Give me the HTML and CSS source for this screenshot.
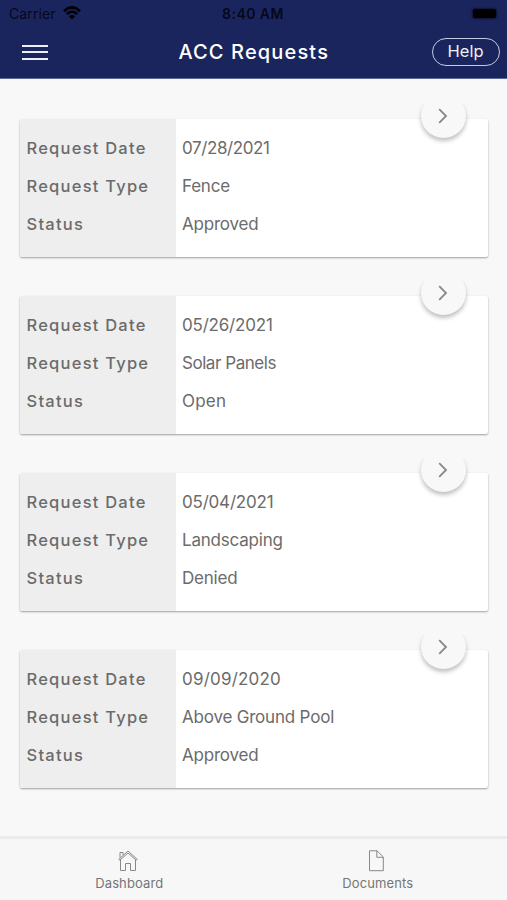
FILE: index.html
```html
<!DOCTYPE html>
<html lang="en">
<head>
<meta charset="utf-8">
<title>ACC Requests</title>
<link rel="stylesheet" href="styles.css">
</head>
<body>
<header class="header">
  <div class="statusbar">
    <div class="carrier"><span>Carrier</span>
      <svg width="18" height="14" viewBox="0 0 18 14"><path d="M1 5.2Q9-2.4 17 5.2M3.8 8Q9 3.2 14.2 8" fill="none" stroke="currentColor" stroke-width="2.6"/><path d="M5.9 10.2Q9 7.6 12.1 10.2L9 13.4Z" fill="currentColor"/></svg>
    </div>
    <span class="clock">8:40 AM</span>
    <span class="battery"></span>
  </div>
  <div class="navbar">
    <div class="menu"><i></i><i></i><i></i></div>
    <h1>ACC Requests</h1>
    <button class="help">Help</button>
  </div>
</header>
<main class="list">
  <article class="card">
    <div class="labels"><span>Request Date</span><span>Request Type</span><span>Status</span></div>
    <div class="values"><span class="date">07/28/2021</span><span>Fence</span><span>Approved</span></div>
    <div class="go"><svg width="10" height="16" viewBox="0 0 10 16"><path d="M1.200 1.200L8 8L1.200 14.800"/></svg></div>
  </article>
  <article class="card">
    <div class="labels"><span>Request Date</span><span>Request Type</span><span>Status</span></div>
    <div class="values"><span>05/26/2021</span><span class="snug">Solar Panels</span><span class="open">Open</span></div>
    <div class="go"><svg width="10" height="16" viewBox="0 0 10 16"><path d="M1.200 1.200L8 8L1.200 14.800"/></svg></div>
  </article>
  <article class="card">
    <div class="labels"><span>Request Date</span><span>Request Type</span><span>Status</span></div>
    <div class="values"><span>05/04/2021</span><span>Landscaping</span><span>Denied</span></div>
    <div class="go"><svg width="10" height="16" viewBox="0 0 10 16"><path d="M1.200 1.200L8 8L1.200 14.800"/></svg></div>
  </article>
  <article class="card">
    <div class="labels"><span>Request Date</span><span>Request Type</span><span>Status</span></div>
    <div class="values"><span class="open">09/09/2020</span><span>Above Ground Pool</span><span>Approved</span></div>
    <div class="go"><svg width="10" height="16" viewBox="0 0 10 16"><path d="M1.200 1.200L8 8L1.200 14.800"/></svg></div>
  </article>
</main>
<nav class="tabs">
  <div class="tab home">
    <svg width="22" height="22" viewBox="0 0 22 22"><path d="M3.500 9.500V20.500H8.500V13.500H13.500V20.500H18.500V9.500M1.800 9.300L11 1L20.200 9.300L19.300 10.300L11 3L2.700 10.300ZM3 7.500V2.500H6V5"/></svg>
    <span>Dashboard</span>
  </div>
  <div class="tab docs">
    <svg width="22" height="22" viewBox="0 0 22 22"><path d="M4.500 .8H12L18.300 7V20.700H4.500ZM11.800 .8V7.300H18.300"/></svg>
    <span>Documents</span>
  </div>
</nav>
</body>
</html>
```

FILE: styles.css
```css
* { box-sizing: border-box; }
body {
  margin: 0;
  height: 900px;
  display: flex;
  flex-direction: column;
  overflow: hidden;
  background: #f8f8f8;
  color: #6b6b6b;
  font-family: Inter, "Liberation Sans", sans-serif;
}
.header {
  height: 79px;
  background: #1b255d;
  border-bottom: 1px solid #5a6693;
}
.statusbar {
  height: 27px;
  padding: 0 11px 0 9px;
  display: grid;
  grid-template-columns: 1fr auto 1fr;
  align-items: center;
  color: #05081a;
  font-size: 14px;
}
.carrier { display: flex; align-items: center; gap: 7px; letter-spacing: .1px; }
.carrier svg { color: #000; margin-top: -2px; }
.clock { margin-left: 1px; font-weight: 600; letter-spacing: .45px; }
.battery { justify-self: end; width: 23px; height: 9px; border-radius: 2px; background: #000; box-shadow: 0 0 2px 1px #0d1333; }
.navbar {
  height: 50px;
  padding: 0 7.500px 0 22px;
  display: grid;
  grid-template-columns: 1fr auto 1fr;
  align-items: center;
  color: #fff;
}
.menu { display: grid; gap: 4.500px; width: 26px; }
.menu i { height: 2px; background: #eceef8; }
h1 { margin: -1px 7px 0 -7px; font-size: 20px; font-weight: 500; letter-spacing: 1.150px; line-height: 26px; }
.help {
  justify-self: end;
  width: 68px;
  height: 28px;
  padding: 0 0 2px;
  border: 1.500px solid #c5cae0;
  border-radius: 14px;
  background: none;
  color: #eef0f8;
  font: 400 16.500px/22px Inter, sans-serif;
}
.list {
  flex: 1;
  padding: 39.500px 19px 0 20px;
  display: flex;
  flex-direction: column;
  gap: 39px;
}
.card {
  position: relative;
  flex: none;
  height: 138px;
  display: grid;
  grid-template-columns: 156px 1fr;
  background: #fff;
  border-radius: 2px;
  box-shadow: 0 1px 2px rgba(0,0,0,.36);
}
.labels, .values {
  padding: 10px 6px 0;
  display: grid;
  grid-template-rows: repeat(3, 38px);
  line-height: 38px;
  font-size: 16.500px;
  white-space: nowrap;
}
.labels { padding-left: 6.500px; background: #eee; border-radius: 2px 0 0 2px; font-weight: 500; letter-spacing: 1.230px; }
.values { font-size: 17px; letter-spacing: -.2px; }
.values .date { letter-spacing: -.4px; }
.values .snug { letter-spacing: -.45px; }
.values .open { letter-spacing: .2px; }
.go {
  position: absolute;
  right: 22.500px;
  top: -24.500px;
  width: 45px;
  height: 44px;
  display: grid;
  place-items: center;
  border-radius: 50%;
  background: #f8f8f8;
  box-shadow: 0 3px 4px rgba(0,0,0,.25);
  clip-path: inset(10px -12px -12px);
}
.go path { fill: none; stroke: #888; stroke-width: 1.800; }
.tabs {
  height: 64px;
  padding: 0 5px;
  display: grid;
  grid-template-columns: 1fr 1fr;
  border-top: 3px solid #ebebeb;
  background: #f7f7f7;
}
.tab { padding-top: 11px; display: flex; flex-direction: column; align-items: center; font-size: 13px; line-height: 16px; gap: 3px; color: #757575; letter-spacing: .1px; }
.tab svg { display: block; margin-right: 3px; }
.tab path { fill: none; stroke: #888; stroke-width: 1; }
```
